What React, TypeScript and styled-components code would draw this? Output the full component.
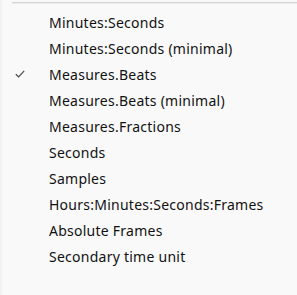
import styled, {createGlobalStyle} from "styled-components";

const Global = createGlobalStyle`
    html, body {
        margin: 0;
        padding: 0;
        background: #f9f9f9;
    }
`;

const items = [
    "Minutes:Seconds",
    "Minutes:Seconds (minimal)",
    "Measures.Beats",
    "Measures.Beats (minimal)",
    "Measures.Fractions",
    "Seconds",
    "Samples",
    "Hours:Minutes:Seconds:Frames",
    "Absolute Frames",
    "Secondary time unit",
];

const checked = 2;

export default function App() {
    return (
        <>
            <Global/>
            <Menu>
                <TopLine/>
                <List>
                    {items.map((label, i) => (
                        <Item key={label}>
                            <Check>
                                {i === checked && (
                                    <svg width="10" height="8" viewBox="0 0 10 8">
                                        <path d="M0.8 4.2 L3.6 6.9 L9.2 0.9" fill="none" stroke="#4a4a4a" strokeWidth="1.2"/>
                                    </svg>
                                )}
                            </Check>
                            <Label>{label}</Label>
                        </Item>
                    ))}
                </List>
            </Menu>
        </>
    );
}

const Menu = styled.div`
    width: 297px;
    height: 295px;
    background: #f9f9f9;
    box-shadow: inset 3px 0 3px -2px rgba(0, 0, 0, .06);
    padding-top: 2px;
    box-sizing: border-box;
`;

const TopLine = styled.div`
    height: 1px;
    margin-left: 12px;
    background: #d4d4d4;
    border-bottom: 1px solid #ececec;
`;

const List = styled.ul`
    list-style: none;
    margin: 5px 0 0;
    padding: 0;
`;

const Item = styled.li`
    display: flex;
    align-items: center;
    height: 26px;
`;

const Check = styled.span`
    width: 49px;
    padding-left: 15px;
    box-sizing: border-box;
    display: flex;
    align-items: center;
`;

const Label = styled.span`
    font-family: "Segoe UI", "Noto Sans", sans-serif;
    font-size: 14px;
    letter-spacing: 0.25px;
    color: #111;
    white-space: nowrap;
`;
